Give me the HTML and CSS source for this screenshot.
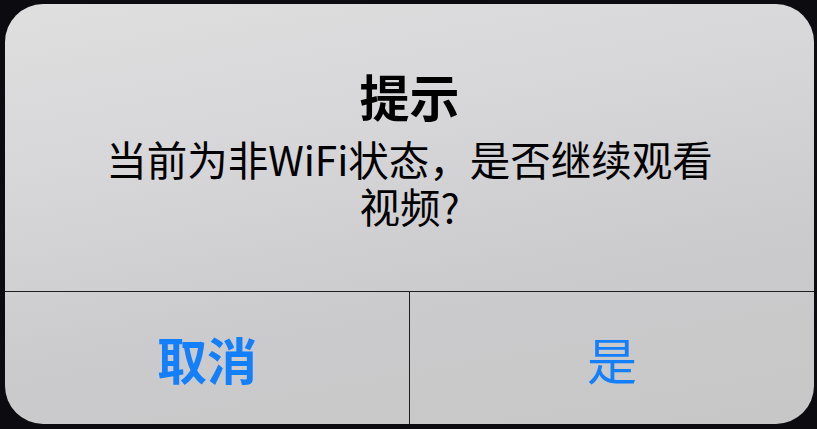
FILE: index.html
```html
<!DOCTYPE html>
<html lang="zh-CN">
<head>
<meta charset="utf-8">
<link rel="stylesheet" href="styles.css">
</head>
<body>
<div class="screen">
  <div class="alert">
    <div class="alert-body">
      <div class="alert-title">提示</div>
      <div class="alert-message">当前为非WiFi状态，是否继续观看视频?</div>
    </div>
    <div class="alert-actions">
      <div class="alert-btn alert-btn-cancel">取消</div>
      <div class="alert-btn alert-btn-ok">是</div>
    </div>
  </div>
</div>
</body>
</html>
```
FILE: styles.css
```css
html, body {
  margin: 0;
  padding: 0;
  background: #0b0b10;
}
.screen {
  width: 817px;
  height: 429px;
  padding: 4px 3px 5px 5px;
  box-sizing: border-box;
  font-family: "Noto Sans CJK SC", "Noto Sans", sans-serif;
}
.alert {
  height: 420px;
  border-radius: 38px;
  overflow: hidden;
  background: linear-gradient(170deg, #e0dfdf 0%, #d6d5d8 35%, #cbcbcd 65%, #c7c7c7 100%);
  display: flex;
  flex-direction: column;
}
.alert-body {
  height: 288px;
  box-sizing: border-box;
  padding-top: 61px;
  display: flex;
  flex-direction: column;
  align-items: center;
  border-bottom: 1px solid #1e1e1e;
}
.alert-title {
  font-size: 50px;
  font-weight: 700;
  line-height: 60px;
  color: #000;
}
.alert-message {
  margin-top: 10px;
  max-width: 625px;
  font-size: 40.5px;
  line-height: 47px;
  color: #000;
  text-align: center;
}
.alert-actions {
  flex: 1;
  display: flex;
}
.alert-btn {
  flex: 1;
  display: flex;
  align-items: center;
  justify-content: center;
  font-size: 50px;
  color: #137ffb;
}
.alert-btn-cancel {
  font-weight: 700;
  border-right: 1px solid #1e1e1e;
}
```
